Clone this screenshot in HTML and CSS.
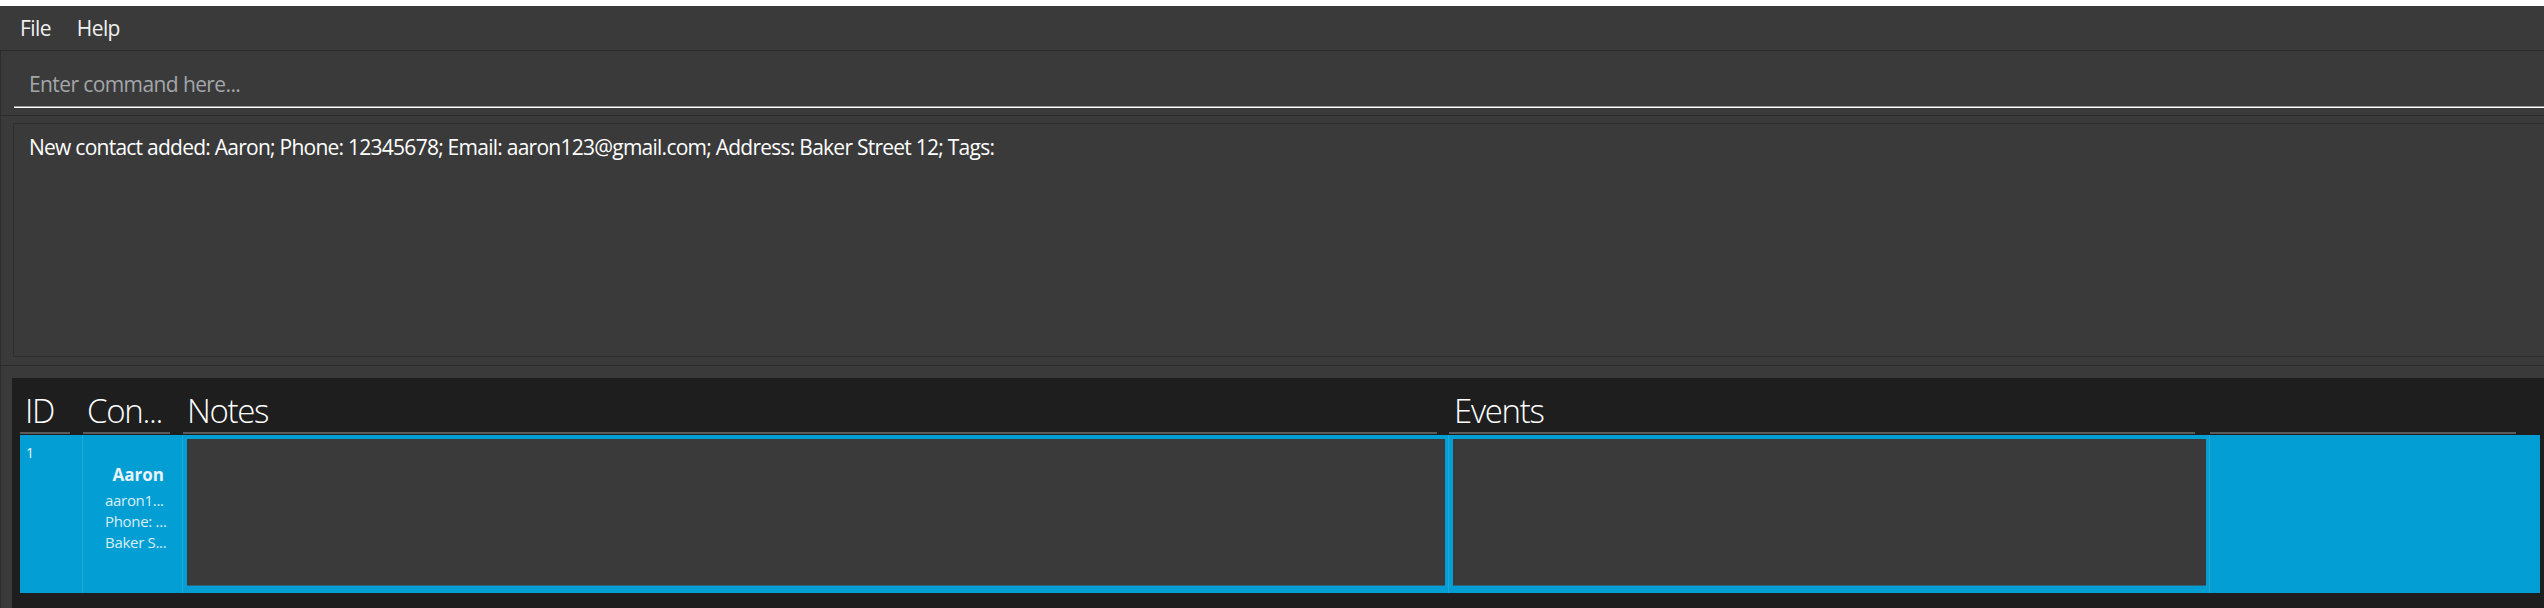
FILE: index.html
```html
<!DOCTYPE html>
<html lang="en">
<head>
<meta charset="utf-8">
<title>Address Book</title>
<link rel="stylesheet" href="styles.css">
</head>
<body>
<div class="app">
  <nav class="menubar">
    <span class="menu-item">File</span>
    <span class="menu-item">Help</span>
  </nav>
  <section class="command">
    <div class="cmd-input">Enter command here...</div>
  </section>
  <section class="result">
    <div class="result-box">New contact added: Aaron; Phone: 12345678; Email: aaron123@gmail.com; Address: Baker Street 12; Tags:</div>
  </section>
  <section class="list-pane">
    <div class="table">
      <div class="thead">
        <div class="th col-id"><span class="th-label">ID</span></div>
        <div class="th col-contact"><span class="th-label">Con...</span></div>
        <div class="th col-notes"><span class="th-label">Notes</span></div>
        <div class="th col-events"><span class="th-label">Events</span></div>
        <div class="th col-last"><span class="th-label"></span></div>
      </div>
      <div class="row">
        <div class="td col-id"><span class="id-num">1</span></div>
        <div class="td col-contact">
          <div class="card">
            <div class="card-name">Aaron</div>
            <div class="card-line">aaron1...</div>
            <div class="card-line">Phone: ...</div>
            <div class="card-line">Baker S...</div>
          </div>
        </div>
        <div class="td col-notes"><div class="inner-box"></div></div>
        <div class="td col-events"><div class="inner-box"></div></div>
        <div class="td col-last"></div>
      </div>
    </div>
  </section>
</div>
</body>
</html>
```

FILE: styles.css
```css
* { box-sizing: border-box; }

html, body {
  margin: 0;
  padding: 0;
  background: #ffffff;
  overflow: hidden;
}

body {
  padding-top: 6px;
  font-family: "Open Sans", "Noto Sans", sans-serif;
  color: #f2f2f2;
}

.app {
  height: 602px;
  background: #3a3a3a;
  display: flex;
  flex-direction: column;
  overflow: hidden;
}

/* menu bar */
.menubar {
  height: 45px;
  flex: none;
  display: flex;
  align-items: center;
  gap: 26px;
  padding-left: 20px;
  border-bottom: 1px solid #2b2b2b;
  font-size: 21px;
  letter-spacing: -0.6px;
  color: #f0f0f0;
}

/* command box */
.command {
  height: 65px;
  flex: none;
  border-left: 1px solid #2d2d2d;
  border-bottom: 1px solid #2b2b2b;
  padding: 13px 0 0 13px;
}

.cmd-input {
  position: relative;
  height: 44px;
  padding: 6px 0 0 15px;
  font-size: 21px;
  letter-spacing: -0.6px;
  color: #a3a6aa;
  border-bottom: 1px solid #ffffff;
}

.cmd-input::after {
  content: "";
  position: absolute;
  left: 0;
  right: 0;
  bottom: 0;
  height: 1px;
  background: #9a9a9a;
}

/* result display */
.result {
  height: 250px;
  flex: none;
  border-left: 1px solid #2d2d2d;
  border-bottom: 1px solid #2b2b2b;
  padding: 7px 0 7px 12px;
}

.result-box {
  height: 234px;
  border: 1px solid #2d2d2d;
  border-right: none;
  padding: 9px 0 0 15px;
  font-size: 21px;
  letter-spacing: -0.75px;
  color: #ffffff;
  white-space: nowrap;
}

/* list pane */
.list-pane {
  flex: 1;
  border-left: 1px solid #2d2d2d;
  padding: 12px 0 0 11px;
  display: flex;
}

.table {
  flex: 1;
  background: #1e1e1e;
  padding-left: 8px;
}

.thead {
  display: flex;
  height: 57px;
}

.th {
  flex: none;
  padding-top: 4px;
}

.th-label {
  display: block;
  height: 52px;
  padding-left: 5px;
  font-size: 33px;
  font-weight: 300;
  letter-spacing: -1.3px;
  line-height: 58px;
  color: #ffffff;
  border-bottom: 2px solid #5b5b5b;
  white-space: nowrap;
  overflow: visible;
}

.col-id { width: 63px; }
.col-contact { width: 100px; }
.col-notes { width: 1266px; }
.col-events { width: 761px; }
.col-last { width: 330px; }

.th.col-id .th-label { margin-right: 13px; }
.th.col-contact .th-label { margin-right: 13px; padding-left: 4px; }
.th.col-notes .th-label { margin-right: 12px; padding-left: 4px; }
.th.col-events .th-label { margin-right: 15px; }
.th.col-last .th-label { margin-right: 24px; }

.row {
  display: flex;
  height: 158px;
}

.td {
  flex: none;
  background: #039ed3;
  border-right: 1px solid #23a8d6;
}

.td.col-last { border-right: none; }

.td.col-id {
  padding: 6px 0 0 6px;
}

.id-num {
  font-size: 14px;
  color: #e6f4fa;
}

.td.col-contact {
  padding: 28px 0 0 22px;
}

.card {
  display: inline-flex;
  flex-direction: column;
  align-items: flex-start;
}

.card-name {
  align-self: center;
  font-size: 17px;
  font-weight: 700;
  line-height: 24px;
  color: #e8f4fa;
  margin-bottom: 3px;
  padding-left: 5px;
}

.card-line {
  font-size: 15px;
  line-height: 21px;
  color: #d8eef7;
  letter-spacing: -0.3px;
  white-space: nowrap;
}

.td.col-notes,
.td.col-events {
  padding: 4px 3px 7px 4px;
}

.inner-box {
  height: 100%;
  background: #3a3a3a;
  border-bottom: 1px solid #2f6478;
}
```
